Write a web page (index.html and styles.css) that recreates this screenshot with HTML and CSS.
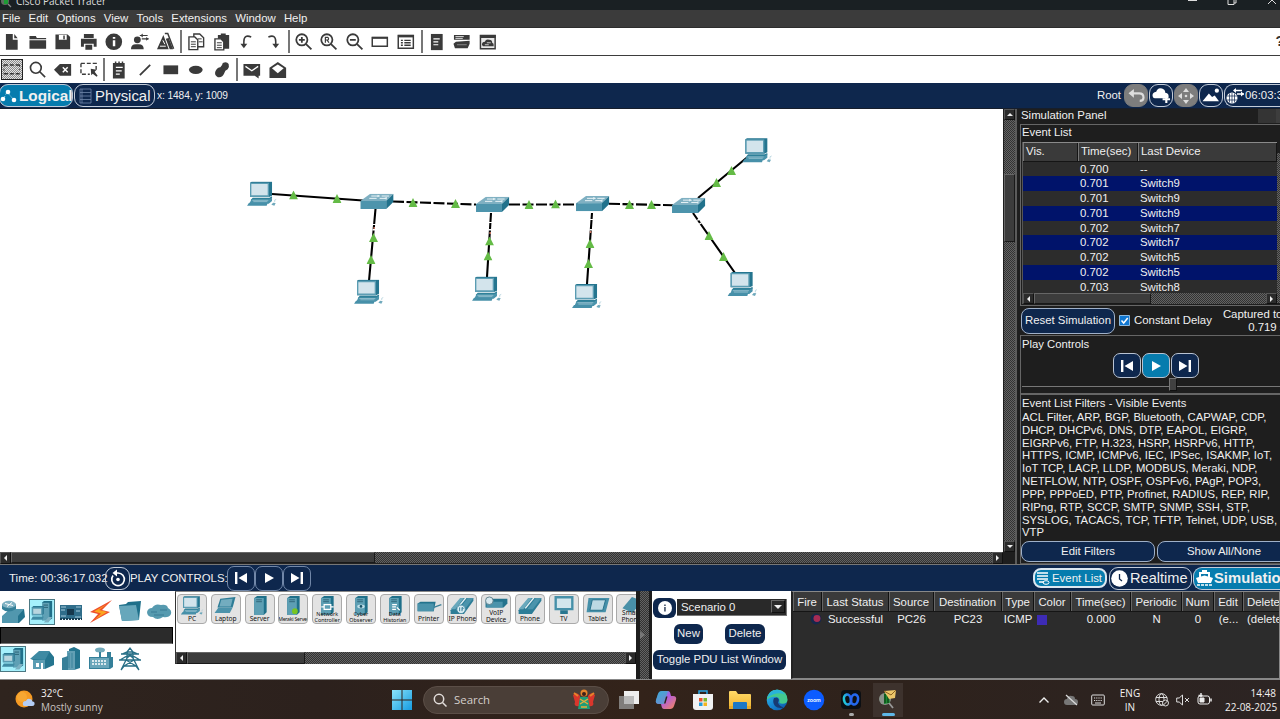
FILE: index.html
```html
<!DOCTYPE html>
<html lang="en">
<head>
<meta charset="utf-8">
<title>Cisco Packet Tracer</title>
<link rel="stylesheet" href="styles.css">
</head>
<body>
<svg class="defs" width="0" height="0">
  <defs>
    <symbol id="pc" viewBox="0 0 90 75">
      <path d="M10 4l5-3h61v42l-9 4H10z" fill="#25758f"/>
      <path d="M10 4h57v43H10z" fill="#5c9db3"/>
      <path d="M14 8h49v34H14z" fill="#d3e4ec"/>
      <path d="M18 49h50l8-4v6l-8 5H12z" fill="#2f8099"/>
      <path d="M14 54h54l8-5v10l-10 8H8z" fill="#4a93ab"/>
      <path d="M17 57h48M20 61h42" stroke="#cfe3ea" stroke-width="1.5"/>
      <path d="M7 64h56l-3 9H1z" fill="#4790a9"/>
      <path d="M74 70l5-6 8 1-4 8z" fill="#6fa9bc"/>
      <path d="M84 62q-2-8 5-8" stroke="#a5c8d5" stroke-width="2" fill="none"/>
    </symbol>
    <symbol id="switch" viewBox="0 0 100 46">
      <path d="M0 22L30 0h70L78 23z" fill="#7fb0c2"/>
      <path d="M0 22h78v24H0z" fill="#4d94ac"/>
      <path d="M78 22l22-22v24L78 46z" fill="#22728c"/>
      <path d="M33 7h22M64 7h22M27 14h22M58 14h20" stroke="#eaf4f7" stroke-width="3"/>
      <path d="M52 3l9 4-10 4zM80 10l-10 4 9 4z" fill="#e3f0f4"/>
    </symbol>
    <symbol id="tri" viewBox="0 0 9 9"><path d="M4.5 0L9 9H0z" fill="#64bb46"/></symbol>
    <symbol id="tower" viewBox="0 0 26 26">
      <path d="M13 3l2-2h9v19l-3 2h-8z" fill="#1f6f89"/><path d="M13 3h8v19h-8z" fill="#5fa0b5"/>
      <path d="M14.500 5.500h5M14.500 8h5" stroke="#285f73"/>
      <path d="M2 8l1.500-1.500H15V15l-1.500 1.500H2z" fill="#2b7892"/><path d="M2 8h11.500v8.500H2z" fill="#5a9cb2"/><path d="M3.500 9.500h8.500v5.500H3.500z" fill="#b9d6df"/>
      <path d="M3 18h12l-1.500 3.500H1z" fill="#3f8ba4"/><path d="M15 24.500l5-6h4l-4 6z" fill="#7db1c2"/>
    </symbol>
    <symbol id="prev" viewBox="0 0 14 14"><path d="M1 1h2.4v12H1zM13 2v10L4.5 7z" fill="#fff"/></symbol>
    <symbol id="play" viewBox="0 0 14 14"><path d="M3 2l9 5-9 5z" fill="#fff"/></symbol>
    <symbol id="next" viewBox="0 0 14 14"><path d="M10.600 1H13v12h-2.400zM1 2l8.500 5L1 12z" fill="#fff"/></symbol>
    <symbol id="phone" viewBox="0 0 26 20">
      <path d="M1 15L12 2h13v3L15 19H1z" fill="#2d7d97"/><path d="M1 14L11 2h4L6 14z" fill="#69a8bc"/>
      <path d="M10 14L19 2h6l-9 12z" fill="#4b94ac"/><path d="M8 13L17 2" stroke="#e7f2f5" stroke-width="1.500"/>
    </symbol>
    <symbol id="srv" viewBox="0 0 26 20"><path d="M7 2l3-2h10v17l-3 3H7z" fill="#1f708a"/><path d="M7 2h10v18H7z" fill="#5d9fb4"/><path d="M9 4h6M9 6h6" stroke="#2f6478"/></symbol>
    <linearGradient id="gw" x2="1" y2="1"><stop stop-color="#8be4fb"/><stop offset="1" stop-color="#159be0"/></linearGradient>
    <linearGradient id="ge" x2="1" y2="1"><stop stop-color="#35c1e8"/><stop offset=".5" stop-color="#1787d4"/><stop offset="1" stop-color="#0b4fa3"/></linearGradient>
    <linearGradient id="gc" x2="1" y2="1"><stop stop-color="#3aa5f5"/><stop offset=".45" stop-color="#b15be0"/><stop offset="1" stop-color="#f98a55"/></linearGradient>
    <linearGradient id="gf" x2="0" y2="1"><stop stop-color="#ffd968"/><stop offset="1" stop-color="#f2b632"/></linearGradient>
    <linearGradient id="gx" x2="1"><stop stop-color="#20c9d8"/><stop offset="1" stop-color="#2b62f0"/></linearGradient>
  </defs>
</svg>

<header class="titlebar">
  <svg width="13" height="10" viewBox="0 0 13 10"><circle cx="5" cy="1" r="4" fill="#5f6b60"/><path d="M4 0h4v4H4z" fill="#1e9a35"/><path d="M8 4l3 3" stroke="#888" stroke-width="1.300"/></svg>
  <span class="title">Cisco Packet Tracer</span>
  <svg class="winbtns" width="95" height="10" viewBox="0 0 95 10" fill="none" stroke="#ddd"><path d="M3 .5h9"/><path d="M43 0v4.500h6V0M49 3h2V0"/><path d="M83 4l4-4M87 0l4 4"/></svg>
</header>
<nav class="menubar"><span>File</span><span>Edit</span><span>Options</span><span>View</span><span>Tools</span><span>Extensions</span><span>Window</span><span>Help</span></nav>

<div class="toolbar">
  <svg viewBox="0 0 20 20"><path d="M4 2h7v6h5v10H4zM12.500 2L16 6.500h-3.500z"/></svg>
  <svg viewBox="0 0 20 20"><path d="M1.500 4H8l1 2h9.500v1.500h-17zM1.500 8.500h17V17h-17z"/></svg>
  <svg viewBox="0 0 20 20"><path fill-rule="evenodd" d="M2.500 2.500h12.500L17.500 5v12.500h-15zM6 3v5h8V3zM10.500 3.500H12v4h-1.500z"/></svg>
  <svg viewBox="0 0 20 20"><path d="M5 2h10v4H5zM2 7h16v8h-3v-3H5v3H2zM6.500 13h7v5h-7z"/></svg>
  <svg viewBox="0 0 20 20"><circle cx="10" cy="10" r="8.500"/><path d="M9 8.500h2.500v6H9zM9 5h2.500v2H9z" fill="#fff"/></svg>
  <svg viewBox="0 0 20 20"><circle cx="7.500" cy="8" r="3.500"/><path d="M1 17.500q0-5 5-5l3 0q5 0 5 5zM10 3h8v1.200h-8zM12 6.500h7v1.200h-7z"/><path d="M13 1.500v4L10.500 3.600zM16.500 5v4L19 7z"/></svg>
  <svg viewBox="0 0 20 20"><path d="M1 17.500L7.500 3l5.500 14.500zM13 6l4.500 11.500H14L10 7z"/><path d="M9 1.500h3L18 17" fill="none" stroke="#3a3a3a" stroke-width="1.500"/><path d="M4 14.500h6M7 8.500l2 4" stroke="#fff"/></svg>
  <i class="sep"></i>
  <svg viewBox="0 0 20 20"><g fill="#fff" stroke="#3a3a3a" stroke-width="1.400"><path d="M8 2h6l4 4v9H8z"/><path d="M3 5h6l3 3v10H3z"/></g><path d="M5 10h5M5 12.500h5M5 15h5M12 7h4M13 10h4" stroke="#3a3a3a"/></svg>
  <svg viewBox="0 0 20 20"><path d="M6 3h3V1.500h5V3h3.500v14H6z"/><path d="M3 7h6l3 3v8.300H3z" fill="#fff" stroke="#3a3a3a" stroke-width="1.400"/><path d="M5 11h5M5 13.500h5M5 16h5" stroke="#3a3a3a"/></svg>
  <svg viewBox="0 0 20 20"><path d="M14.500 5Q7 2 7 10v3" fill="none" stroke="#3a3a3a" stroke-width="1.600"/><path d="M3.500 12h7L7 16.500z"/></svg>
  <svg viewBox="0 0 20 20"><path d="M5.500 5Q13 2 13 10v3" fill="none" stroke="#3a3a3a" stroke-width="1.600"/><path d="M9.500 12h7L13 16.500z"/></svg>
  <i class="sep"></i>
  <svg viewBox="0 0 20 20"><g fill="none" stroke="#3a3a3a" stroke-width="1.800"><circle cx="8" cy="8" r="5.700"/><path d="M12.300 12.300l5.500 5.500M5 8h6M8 5v6"/></g></svg>
  <svg viewBox="0 0 20 20"><g fill="none" stroke="#3a3a3a" stroke-width="1.800"><circle cx="8" cy="8" r="5.700"/><path d="M12.300 12.300l5.500 5.500"/><path d="M6.500 11V5.500h2.500q1.500 1.300 0 2.700H7M8.500 8.500l1.700 2.500" stroke-width="1.200"/></g></svg>
  <svg viewBox="0 0 20 20"><g fill="none" stroke="#3a3a3a" stroke-width="1.800"><circle cx="8" cy="8" r="5.700"/><path d="M12.300 12.300l5.500 5.500M5 8h6"/></g></svg>
  <svg viewBox="0 0 20 20"><path d="M2.300 5.500h15.400v9H2.300z" fill="#fff" stroke="#3a3a3a" stroke-width="1.500"/><path d="M2 5h16v2H2z"/></svg>
  <svg viewBox="0 0 20 20"><path d="M2.300 3.500h15.400v13H2.300z" fill="#fff" stroke="#3a3a3a" stroke-width="1.500"/><path d="M2 3h16v2.500H2z"/><path d="M5 8.500h2M5 11h2M5 13.500h2M8.500 8.500H15M8.500 11H15M8.500 13.500H15" stroke="#3a3a3a" stroke-width="1.400"/></svg>
  <i class="sep"></i>
  <svg viewBox="0 0 20 20"><path d="M4 2h12v16.500H4z"/><path d="M6.500 7H13M6.500 10h5M6.500 13h5" stroke="#fff" stroke-width="1.200"/></svg>
  <svg viewBox="0 0 20 20"><path d="M2 3h16v5H2zM4 10l14-1v3l-2 4.500H3L1.500 12z"/><path d="M3.500 4.700H12M3.500 6.500H11" stroke="#ddd"/><path d="M5 13h10" stroke="#888"/></svg>
  <svg viewBox="0 0 20 20"><path d="M2.500 3.500h15v13.500h-15z" fill="#e8e8e8" stroke="#3a3a3a" stroke-width="1.500"/><path d="M2 3h16v3H2zM4 13q0-3 3-3 1-3 4.500-2 3 0 3 3 2 .5 1.500 3.500H5z"/><path d="M9 11h4M7 13h4" stroke="#ccc"/></svg>
  <b class="help">?</b>
</div>
<div class="toolbar second">
  <span class="picked"><svg viewBox="0 0 20 20"><path d="M2 5h16M2 14h16" fill="none" stroke="#333" stroke-width="1.500" stroke-dasharray="4 2"/><path d="M2 5v9M18 5v5" stroke="#333" stroke-dasharray="2 2"/></svg></span>
  <svg viewBox="0 0 20 20"><g fill="none" stroke="#3a3a3a" stroke-width="1.700"><circle cx="8" cy="8" r="5.500"/><path d="M12 12l5.500 5.500"/></g></svg>
  <svg viewBox="0 0 20 20"><path d="M7 4h11.500v12H7L1 10z"/><path d="M10 7.500l5 5M15 7.500l-5 5" stroke="#fff" stroke-width="1.500"/></svg>
  <svg viewBox="0 0 20 20"><path d="M2 3.500h15.500v8M2 3.500v11h9" fill="none" stroke="#3a3a3a" stroke-width="1.400" stroke-dasharray="4 2"/><path d="M12 9l6 1-2 2 3 4-1 1-4-3-1.500 1.500z"/></svg>
  <i class="sep"></i>
  <svg viewBox="0 0 20 20"><path d="M4 3h2V1.500h1.500V3h2V1.500H11V3h2V1.500h1.500V3H16v16H4z"/><path d="M7 7.500h7M7 11h6M7 14.500h4" stroke="#fff" stroke-width="1.300"/></svg>
  <svg viewBox="0 0 20 20"><path d="M5 15.500L15.500 5" stroke="#3a3a3a" stroke-width="1.800"/></svg>
  <svg viewBox="0 0 20 20"><path d="M2.500 5.500h15v9h-15z"/></svg>
  <svg viewBox="0 0 20 20"><ellipse cx="10" cy="10" rx="7" ry="4.200"/></svg>
  <svg viewBox="0 0 20 20"><path d="M11 3q4-2 6 1 1 3-1 5.500-3 1-3.500 4-2 5-6.500 4-4-2-2.500-6 2-4 5-4 2-2 2.500-4.500z"/></svg>
  <i class="sep"></i>
  <svg viewBox="0 0 20 20"><path d="M1.500 4h17v12H17v3l-4-3H1.500z"/><path d="M3.500 6.500l6.500 4.500 6.500-4.500" fill="none" stroke="#fff" stroke-width="1.300"/></svg>
  <svg viewBox="0 0 20 20"><path d="M1.500 8L10 2l8.500 6v10.500h-17z"/><path d="M4 8.500l6-4 6 4-6 5z" fill="#fff"/></svg>
</div>

<div class="bluebar top">
  <div class="tab on logical"><svg width="17" height="16" viewBox="0 0 17 16"><path d="M3 12L7 4l7 8" fill="none" stroke="#9fd2e6" stroke-dasharray="1.500 1.500"/><circle cx="3" cy="11" r="2.300" fill="#fff"/><circle cx="8" cy="4" r="2.300" fill="#fff"/><circle cx="14" cy="12" r="2.300" fill="#fff"/></svg><b>Logical</b></div>
  <div class="tab physical"><svg width="13" height="16" viewBox="0 0 13 16" fill="none" stroke="#7087aa" stroke-width=".8"><path d="M1 1h11v14H1zM1 4.500h11M1 8h11M1 11.500h11M3 1v14"/></svg><span>Physical</span></div>
  <span class="coords">x: 1484, y: 1009</span>
  <span class="root">Root</span>
  <span class="round grey"><svg width="18" height="15" viewBox="0 0 16 14"><path d="M3 5h8q4 0 4 4 0 3-3.500 3" fill="none" stroke="#ddd" stroke-width="2"/><path d="M6 1v8L1 5z" fill="#ddd"/></svg></span>
  <span class="round"><svg width="20" height="17" viewBox="0 0 18 16"><path d="M1 8q0-3 3.500-3.500Q6 0 10 1.500q3 1 3 4 4 .5 3 5H3Q1 10.500 1 8z" fill="#fff"/><path d="M14 8v7M10.500 11.500h7" stroke="#fff" stroke-width="2"/></svg></span>
  <span class="round grey"><svg width="18" height="18" viewBox="0 0 18 18"><path d="M9 1l3 4H6zM9 17l3-4H6zM1 9l4-3v6zM17 9l-4-3v6z" fill="#ddd"/><circle cx="9" cy="9" r="1.300" fill="#ddd"/></svg></span>
  <span class="round"><svg width="20" height="17" viewBox="0 0 18 16"><path d="M1 13.500L7 6l3 3.500L12.500 8l4 5.500z" fill="#fff"/><circle cx="14.500" cy="3.500" r="2" fill="#fff"/></svg></span>
  <span class="round clock"><svg width="20" height="18" viewBox="0 0 20 18"><circle cx="7" cy="11" r="5.500" fill="#fff"/><path d="M2 9h10M2 13h10M7 6v10M4.500 6.500v9M9.500 6.500v9" stroke="#0e274d" stroke-width=".7"/><path d="M9 3.500h8M12 7h7" stroke="#fff" stroke-width="1.400"/><path d="M11 1v5L8 3.500zM16 4.500v5l3-2.500z" fill="#fff"/></svg><span>06:03:30</span></span>
</div>

<main class="work">
  <section class="stage">
    <div class="stagerow">
      <svg class="canvas" width="1003" height="443" viewBox="0 109 1003 443">
        <g stroke="#000" stroke-width="2.100">
          <path d="M272 194L363 200.500M375.500 209L369 281M491 213L487 277M592 213L587 284M698 198L747 157.500M693 213L735 273"/>
          <path d="M393 201.500L476 204.500M509 204.500H578M609 203.800L673 205.200" stroke-dasharray="11 2.500"/>
        </g>
        <path d="M374.500 224v1M374 229v1.500M490.500 222v1M490 229v1.500M591.500 219v1M591 229v1.500M698 219l1 1M700 223l.6 1" stroke="#fff" stroke-width="3"/>
        <path d="M374.200 227v2M490.200 232v2M590.600 231v2" stroke="#c87663" stroke-width="1.500"/>
        <g>
          <use href="#switch" x="360.300" y="193.700" width="33.300" height="15.300"/><use href="#switch" x="476" y="196.700" width="33.300" height="15.300"/><use href="#switch" x="576" y="196" width="33.300" height="15.300"/><use href="#switch" x="672" y="197.800" width="33.300" height="15.300"/>
          <use href="#pc" x="246.700" y="181.300" width="30" height="25"/><use href="#pc" x="353.700" y="279.500" width="30" height="25"/><use href="#pc" x="471.700" y="276.300" width="30" height="25"/><use href="#pc" x="571.700" y="283.700" width="30" height="25"/><use href="#pc" x="742" y="138" width="30" height="25"/><use href="#pc" x="727.300" y="271.700" width="30" height="25"/>
        </g>
        <g>
          <use href="#tri" x="289" y="190.500" width="9" height="9"/><use href="#tri" x="332.500" y="194" width="9" height="9"/><use href="#tri" x="408.500" y="198" width="9" height="9"/><use href="#tri" x="451" y="199" width="9" height="9"/>
          <use href="#tri" x="369" y="233" width="9" height="9"/><use href="#tri" x="366.500" y="255" width="9" height="9"/><use href="#tri" x="485" y="236.500" width="9" height="9"/><use href="#tri" x="483.500" y="251.500" width="9" height="9"/>
          <use href="#tri" x="524.500" y="200" width="9" height="9"/><use href="#tri" x="551" y="199.500" width="9" height="9"/><use href="#tri" x="625" y="200" width="9" height="9"/><use href="#tri" x="647" y="200" width="9" height="9"/>
          <use href="#tri" x="585.500" y="239" width="9" height="9"/><use href="#tri" x="584" y="259" width="9" height="9"/><use href="#tri" x="712" y="178" width="9" height="9"/><use href="#tri" x="727" y="166" width="9" height="9"/><use href="#tri" x="704.500" y="231" width="9" height="9"/><use href="#tri" x="719" y="252" width="9" height="9"/>
        </g>
      </svg>
      <div class="vscroll"><i class="arr up"></i><i class="track a"></i><i class="thumb"></i><i class="track b"></i><i class="arr down"></i></div>
    </div>
    <div class="hscroll main"><i class="arr left"></i><i class="thumb"></i><i class="track"></i><i class="arr right"></i></div>
  </section>

  <aside class="panel">
    <div class="phead"><span>Simulation Panel</span><i class="dock"></i></div>
    <section class="group events">
      <h3>Event List</h3>
      <div class="ev">
        <div class="evmain">
          <div class="evrow evhead"><span>Vis.</span><span>Time(sec)</span><span>Last Device</span></div>
          <div class="evbody">
            <div class="evrow"><span></span><span>0.700</span><span>--</span></div>
            <div class="evrow sel"><span></span><span>0.701</span><span>Switch9</span></div>
            <div class="evrow"><span></span><span>0.701</span><span>Switch9</span></div>
            <div class="evrow sel"><span></span><span>0.701</span><span>Switch9</span></div>
            <div class="evrow"><span></span><span>0.702</span><span>Switch7</span></div>
            <div class="evrow sel"><span></span><span>0.702</span><span>Switch7</span></div>
            <div class="evrow"><span></span><span>0.702</span><span>Switch5</span></div>
            <div class="evrow sel"><span></span><span>0.702</span><span>Switch5</span></div>
            <div class="evrow"><span></span><span>0.703</span><span>Switch8</span></div>
          </div>
          <div class="hscroll evs"><i class="arr left"></i><i class="thumb"></i><i class="track"></i><i class="arr right"></i></div>
        </div>
        <div class="evside"></div>
      </div>
    </section>
    <section class="reset">
      <span class="btn big">Reset Simulation</span>
      <svg class="check" width="11" height="11" viewBox="0 0 11 11"><path d="M.5.5h10v10H.5z" fill="#1177d1" stroke="#8cb8de"/><path d="M2.500 5.500L4.700 8l4-5" fill="none" stroke="#fff" stroke-width="1.500"/></svg>
      <span>Constant Delay</span>
      <span class="captured">Captured to:<br>0.719 s</span>
    </section>
    <section class="group playbox">
      <h3>Play Controls</h3>
      <div class="plays"><span class="pbtn"><svg><use href="#prev"/></svg></span><span class="pbtn on"><svg><use href="#play"/></svg></span><span class="pbtn"><svg><use href="#next"/></svg></span></div>
      <div class="slider"><i></i></div>
    </section>
    <section class="group filters">
      <h3>Event List Filters - Visible Events</h3>
      <p>ACL Filter, ARP, BGP, Bluetooth, CAPWAP, CDP,<br>DHCP, DHCPv6, DNS, DTP, EAPOL, EIGRP,<br>EIGRPv6, FTP, H.323, HSRP, HSRPv6, HTTP,<br>HTTPS, ICMP, ICMPv6, IEC, IPSec, ISAKMP, IoT,<br>IoT TCP, LACP, LLDP, MODBUS, Meraki, NDP,<br>NETFLOW, NTP, OSPF, OSPFv6, PAgP, POP3,<br>PPP, PPPoED, PTP, Profinet, RADIUS, REP, RIP,<br>RIPng, RTP, SCCP, SMTP, SNMP, SSH, STP,<br>SYSLOG, TACACS, TCP, TFTP, Telnet, UDP, USB,<br>VTP</p>
      <div class="fbtns"><span class="btn">Edit Filters</span><span class="btn">Show All/None</span></div>
    </section>
  </aside>
</main>

<div class="bluebar bottom">
  <span class="time">Time: 00:36:17.032</span>
  <span class="round reload"><svg width="18" height="19" viewBox="0 0 18 19"><path d="M4 6.500a6.300 6.300 0 1 0 5-2.500H6" fill="none" stroke="#fff" stroke-width="1.700"/><path d="M8 .5v7L3.500 4z" fill="#fff"/><circle cx="9" cy="10.500" r="1.800" fill="#fff"/></svg></span>
  <span class="pc-label">PLAY CONTROLS:</span>
  <span class="pbtn line"><svg><use href="#prev"/></svg></span><span class="pbtn line"><svg><use href="#play"/></svg></span><span class="pbtn line"><svg><use href="#next"/></svg></span>
  <span class="tab on evtab"><svg width="14" height="14" viewBox="0 0 14 14"><path d="M1 2h11M1 5h11M1 8h11M3 11h5" stroke="#fff" stroke-width="1.400"/><ellipse cx="10" cy="11.500" rx="3" ry="1.800" fill="none" stroke="#fff"/></svg><span>Event List</span></span>
  <span class="tab rt"><svg width="17" height="17" viewBox="0 0 17 17"><circle cx="8.500" cy="8.500" r="8.300" fill="#fff"/><path d="M8.500 4v5l2.500 2" fill="none" stroke="#0e274d" stroke-width="1.300"/></svg><span>Realtime</span></span>
  <span class="tab on sim"><svg width="17" height="16" viewBox="0 0 17 16"><path d="M6 0h5v2h3v5l3 1-2 5H2L0 8l3-1V2h3z" fill="#fff"/><path d="M5 4h7v2.500L8.500 5.500 5 6.500z" fill="#0c79ab"/><path d="M1 15h15" stroke="#fff" stroke-width="1.500" stroke-dasharray="3 1"/></svg><b>Simulation</b></span>
</div>

<section class="lower">
  <div class="cats">
    <div class="catrow">
      <svg viewBox="0 0 26 26"><path d="M2 19l8-9h14l1 8-6 6H2z" fill="#23728c"/><path d="M2 17l8-7h14l-6 7zM2 17h16v7H2z" fill="#5197ae"/><path d="M2 5v5q6 5 14 0V5z" fill="#347f98"/><ellipse cx="9" cy="5.500" rx="7" ry="3.700" fill="#80b2c3"/><path d="M5 4.500l8 2M12 3.500l-5 4" stroke="#fff"/></svg>
      <span class="cat on"><svg viewBox="0 0 26 26"><use href="#tower"/></svg></span>
      <svg viewBox="0 0 26 26"><path d="M2 6h22v14H2z" fill="#2f6d8a"/><path d="M9 10h7v6H9z" fill="#16384d"/><path d="M3 8h5M18 8h5M3 11h4M18 12h4M3 17h5M17 18h6" stroke="#a5cbdc"/><path d="M2 20h22" stroke="#143b50" stroke-width="2" stroke-dasharray="2 1"/></svg>
      <svg viewBox="0 0 26 26"><path d="M24 1L2 13l8 2-8 9 20-11-8-2z" fill="#ee4f2b"/><path d="M19 5L6 12.500l7 2-6 6L19 13l-8-2z" fill="#fba51f"/></svg>
      <svg viewBox="0 0 26 26"><path d="M2 6l7-1 2-2 13-1-2 19-17 1z" fill="#1f708a"/><path d="M2 7l17-1 3 15-17 1z" fill="#67a7bb"/></svg>
      <svg viewBox="0 0 26 26"><path d="M1 13q1-4 5-4 3-5 9-3 6-1 7 3 4 2 3 6-2 4-8 3-6 4-10 0-6 0-6-5z" fill="#569aaf"/><path d="M5 13h6M14 11h7M8 16h10" stroke="#387b94"/></svg>
    </div>
    <div class="blackbox"></div>
    <div class="catrow">
      <span class="cat on"><svg viewBox="0 0 26 26"><use href="#tower"/></svg></span>
      <svg viewBox="0 0 26 26"><path d="M2 13l8-7h11l4 5v8l-9 4H4v-9z" fill="#25758f"/><path d="M4 14h12v9H4z" fill="#5b9db3"/><path d="M1 13l9-8h11l-5 9z" fill="#3e8aa3"/><path d="M7 17h3v4H7zM12 17h2v6h-2z" fill="#fff"/></svg>
      <svg viewBox="0 0 26 26"><path d="M11 3l5-2 6 3v18l-6 2h-5z" fill="#25758f"/><path d="M9 5h8v19H9z" fill="#629fb4"/><path d="M4 12l6-2v14H4z" fill="#377f98"/><path d="M11 7v15M14 7v15" stroke="#3b839c"/></svg>
      <svg viewBox="0 0 26 26"><path d="M1 11h18V6h4v5h2v10l-3 2H1z" fill="#347f99"/><path d="M2 12h19v10H2z" fill="#6aa6ba"/><path d="M4 15h15M4 18h15" stroke="#fff" stroke-width="1.500" stroke-dasharray="2 1"/><ellipse cx="12" cy="4" rx="5" ry="2.500" fill="#73aabb"/><path d="M12 6v5" stroke="#347f99" stroke-width="2"/></svg>
      <svg viewBox="0 0 26 26"><path d="M10 6l3-4 3 4v6l6 12M10 6v6L4 24M4 8h18M2 14h22M5 8l5-2h6l5 2M3 14l7-4h6l7 4M10 7l6 5M16 7l-6 5M9 14l10 6M17 14L7 20M7 20h12M7 20l-3 4M19 20l3 4" fill="none" stroke="#286f86" stroke-width="1.300"/></svg>
    </div>
  </div>
  <div class="devices">
    <div class="devlist">
      <div class="dev"><svg viewBox="0 0 90 75"><use href="#pc"/></svg><em>PC</em></div>
      <div class="dev"><svg viewBox="0 0 26 20"><path d="M7 3l16-2-3 11H4z" fill="#2d7c96"/><path d="M8 4l12-1-2 8H6z" fill="#73acbf"/><path d="M1 18l4-6h15l-3 6z" fill="#4c93ab"/></svg><em>Laptop</em></div>
      <div class="dev"><svg viewBox="0 0 26 20"><use href="#srv"/></svg><em>Server</em></div>
      <div class="dev"><svg viewBox="0 0 26 20"><use href="#srv"/><circle cx="15" cy="16" r="3" fill="#77c522"/></svg><em class="tight">Meraki Server</em></div>
      <div class="dev two"><svg viewBox="0 0 26 20"><use href="#srv"/><path d="M10 9h7v5h-7zM7 11.500h3M17 11.500h3" fill="none" stroke="#fff" stroke-width="1.300"/></svg><em>Network<br>Controller</em></div>
      <div class="dev two"><svg viewBox="0 0 26 20"><use href="#srv"/><ellipse cx="13" cy="11" rx="4" ry="2" fill="#bcdde7"/><circle cx="13" cy="11" r="1.400" fill="#134f65"/></svg><em>Cyber<br>Observer</em></div>
      <div class="dev two"><svg viewBox="0 0 26 20"><use href="#srv"/><path d="M10 9h5M10 11.500h4M10 14h4M15 12l3 3" stroke="#fff" stroke-width="1.300"/></svg><em>Data<br>Historian</em></div>
      <div class="dev"><svg viewBox="0 0 26 20"><path d="M1 8l3-2h16l-2 10H1z" fill="#24738d"/><path d="M1 8h17v8H1z" fill="#4b93ab"/><path d="M18 12l8-3" stroke="#3c8098" stroke-width="1.500"/></svg><em>Printer</em></div>
      <div class="dev"><svg viewBox="0 0 26 20"><use href="#phone"/><circle cx="12" cy="14" r="4.500" fill="#d9edf4" stroke="#448aa3"/><path d="M10.500 12v4M13 16v-4q3 1 0 2" stroke="#357c96" fill="none"/></svg><em>IP Phone</em></div>
      <div class="dev two"><svg viewBox="0 0 26 20"><path d="M2 6l4-3h19v5l-4 4H2z" fill="#24738d"/><path d="M3 6h17v6H3z" fill="#4b93ab"/><circle cx="6" cy="5" r="4" fill="#d8e9ef" stroke="#607f8b"/></svg><em class="wide">VoIP<br>Device</em></div>
      <div class="dev"><svg viewBox="0 0 26 20"><use href="#phone"/></svg><em>Phone</em></div>
      <div class="dev"><svg viewBox="0 0 26 20"><path d="M3 0h20v15H3z" fill="#4690a9"/><path d="M5.500 2.500h15v10h-15z" fill="#d3e6ed"/><path d="M9 15h8v4H9z" fill="#28768f"/></svg><em>TV</em></div>
      <div class="dev"><svg viewBox="0 0 26 20"><path d="M3 2h22l-4 15H1z" fill="#4690a9"/><path d="M7 4h14l-3 11H4.500z" fill="#bcd9e3" stroke="#24708a"/></svg><em>Tablet</em></div>
      <div class="dev two"><svg viewBox="0 0 26 20"><path d="M4 13L14 1l10 4-9 13z" fill="#4990a8"/></svg><em class="wide">Smart<br>Phone</em></div>
    </div>
    <div class="hscroll dv"><i class="arr left"></i><i class="thumb"></i><i class="track"></i><i class="arr right"></i></div>
  </div>
  <div class="splitter"><i></i></div>
  <div class="scenario">
    <div class="scrow"><span class="info"><svg width="14" height="14" viewBox="0 0 14 14"><circle cx="7" cy="7" r="7" fill="#fff"/><path d="M6.200 6h1.500v4.500H6.200zM6.200 3.500h1.500V5H6.200z" fill="#34435c"/></svg></span><span class="select">Scenario 0<i></i></span></div>
    <div class="scbtns"><span>New</span><span>Delete</span></div>
    <span class="toggle">Toggle PDU List Window</span>
  </div>
  <div class="pdu">
    <div class="prow phdr"><span>Fire</span><span>Last Status</span><span>Source</span><span>Destination</span><span>Type</span><span>Color</span><span>Time(sec)</span><span>Periodic</span><span>Num</span><span>Edit</span><span>Delete</span></div>
    <div class="prow"><span><svg width="12" height="12" viewBox="0 0 10 10"><circle cx="5" cy="5" r="4.500" fill="#15274b"/><circle cx="5.800" cy="4.600" r="2.900" fill="#a62c54"/></svg></span><span>Successful</span><span>PC26</span><span>PC23</span><span>ICMP</span><span><i class="swatch"></i></span><span>0.000</span><span>N</span><span>0</span><span>(e...</span><span>(delete)</span></div>
  </div>
</section>

<footer class="taskbar">
  <div class="weather">
    <svg width="20" height="20" viewBox="0 0 20 20"><circle cx="9" cy="9" r="8.500" fill="#f59a23"/><circle cx="7" cy="7" r="5" fill="#f9b13e" opacity=".6"/><path d="M8 15q-1-4 3-4 1-3 4-2 2 0 2.500 2.500 2.500 0 2 3Q19 16 17 16H10q-2 0-2-1z" fill="#b4cdf4"/></svg>
    <div><div>32°C</div><div class="dim">Mostly sunny</div></div>
  </div>
  <svg class="win" width="20" height="20" viewBox="0 0 20 20"><path d="M0 0h9.500v9.500H0zM10.500 0H20v9.500h-9.500zM0 10.500h9.500V20H0zM10.500 10.500H20V20h-9.500z" fill="url(#gw)"/></svg>
  <div class="search">
    <svg width="14" height="14" viewBox="0 0 14 14" fill="none" stroke="#e3dedb" stroke-width="1.500"><circle cx="6" cy="6" r="4.700"/><path d="M9.500 9.500l4 4"/></svg>
    <span>Search</span>
    <svg width="24" height="21" viewBox="0 0 24 21"><circle cx="12" cy="4" r="3.500" fill="#e6842b"/><path d="M1 6q4-4 7 1v10Q1 18 3 13zM23 6q-4-4-7 1v10q7 1 5-4z" fill="#d9362c"/><path d="M2 4l4 3M22 4l-4 3" stroke="#e6842b" stroke-width="2"/><path d="M8 8h8l2 12H6z" fill="#1e9d78"/><circle cx="12" cy="5" r="2" fill="#3f211a"/><path d="M8 10l8 5M16 10l-8 5M9 18h6" stroke="#e9aa3c" stroke-width="1.300"/></svg>
  </div>
  <div class="apps">
    <span><svg viewBox="0 0 22 22"><path d="M1 7h15v13H1z" fill="#807d7b"/><path d="M6 2h15v13H6z" fill="#eee"/><path d="M6 7h10v8H6z" fill="#bbb"/></svg></span>
    <span><svg viewBox="0 0 22 22"><path d="M7 2h6q2 0 2.500 3l.5 2h2q4 0 3 4l-2 6q-1 3-4 3H9q-2 0-2.500-3L6 15H4q-4 0-3-4l2-6q1-3 4-3z" fill="url(#gc)"/><path d="M7 2h6l-4 13H4q-4 0-3-4l2-6q1-3 4-3z" fill="#34b6c4" opacity=".6"/><path d="M12.500 7.500h-1.500L9 14.500h1.500z" fill="#2d221e"/></svg></span>
    <span><svg viewBox="0 0 22 22"><path d="M7 5V2h8v3" fill="none" stroke="#2aa5e2" stroke-width="1.500"/><path d="M1 5h20v13q0 3-3 3H4q-3 0-3-3z" fill="#f1f2f3"/><path d="M7 9h3.500v3.500H7z" fill="#e9512d"/><path d="M11.500 9H15v3.500h-3.500z" fill="#79b72c"/><path d="M7 13.500h3.500V17H7z" fill="#259cdc"/><path d="M11.500 13.500H15V17h-3.500z" fill="#f4b51e"/></svg></span>
    <span><svg viewBox="0 0 22 22"><path d="M0 3q0-1 1-1h6l2 3h12q1 0 1 1v13H0z" fill="url(#gf)"/><path d="M0 17h22v3H0z" fill="#e5a929"/><path d="M4 14q0-1 1-1h12q1 0 1 1v6H4z" fill="#1b78c6"/></svg></span>
    <span><svg viewBox="0 0 22 22"><circle cx="11" cy="11" r="10.300" fill="url(#ge)"/><path d="M1 9Q4 0 12 .800q9 1 9.500 10 0 4-5 4-4 0-3-3 0-4-5-4-5 0-7.500 3z" fill="#43c98f"/><path d="M1 9Q4 0 12 .800q5 1 7 5-7-4-18 3z" fill="#29b3d8"/><path d="M8 9q-2 4 1 8 3 3 9 1.500Q13 17 12 13.500 14 10 11 8.500z" fill="#163b74"/></svg></span>
    <span><svg viewBox="0 0 22 22"><circle cx="11" cy="11" r="10.300" fill="#0b5cff"/><text x="11" y="13" text-anchor="middle" class="zoomtxt">zoom</text></svg></span>
    <span class="dot"><svg viewBox="0 0 22 22"><rect x="1" y="2" width="20" height="19" rx="4" fill="#0c0f13"/><ellipse cx="14.500" cy="11.500" rx="3.500" ry="5" fill="none" stroke="#2468ee" stroke-width="2.600" transform="rotate(12 14.500 11.500)"/><ellipse cx="7.500" cy="11.500" rx="3.500" ry="5" fill="none" stroke="url(#gx)" stroke-width="2.600" transform="rotate(-12 7.500 11.500)"/></svg></span>
    <span class="active"><svg viewBox="0 0 22 22"><circle cx="8" cy="11" r="6" fill="#8b938b"/><path d="M7 5l5 3 1 7-6 1z" fill="#1b8c31"/><path d="M8 6v9M11 7v8" stroke="#0a2b10"/><path d="M12 15l4 5" stroke="#999" stroke-width="1.800"/><path d="M7 3l12-1-1 8-6 1z" fill="#edc669"/><path d="M7 3l7 4 5-5" fill="none" stroke="#8e6422"/></svg></span>
  </div>
  <div class="tray">
    <svg width="12" height="8" viewBox="0 0 12 8"><path d="M1.500 6.500L6 2l4.500 4.500" fill="none" stroke="#eee" stroke-width="1.400"/></svg>
    <svg width="16" height="12" viewBox="0 0 16 12"><path d="M1 8q0-3 3-3 1-4 5-3 3 0 3 3 3 0 3 3t-3 3H4q-3 0-3-3z" fill="#777"/><path d="M3 1l11 10" stroke="#ddd" stroke-width="1.200"/></svg>
    <svg width="14" height="12" viewBox="0 0 14 12" fill="none" stroke="#ddd"><rect x=".7" y="1" width="12.600" height="10" rx="1"/><path d="M3 4h8M3 6.500h8" stroke-dasharray="1.200 1"/><path d="M4 9h6"/></svg>
    <div class="lang">ENG<br>IN</div>
    <svg width="14" height="14" viewBox="0 0 14 14" fill="none" stroke="#ddd"><circle cx="6.500" cy="6.500" r="5.800"/><ellipse cx="6.500" cy="6.500" rx="2.500" ry="5.800"/><path d="M1 4.500h11M1 8.500h7"/><circle cx="10.500" cy="10" r="3" fill="#2d2421"/><path d="M8.500 12l4-4"/></svg>
    <svg width="14" height="12" viewBox="0 0 14 12" fill="none" stroke="#ddd"><path d="M.7 4h2.500L6.500 1v10L3.200 8H.7zM9 4l4 4M13 4L9 8"/></svg>
    <svg width="15" height="13" viewBox="0 0 15 13" fill="none" stroke="#eee"><rect x="1" y="3" width="11.500" height="8" rx="2"/><path d="M14 5.500v3" stroke-width="1.500"/><path d="M3 5h4v4H3z" fill="#eee"/><path d="M4 0v4M1.500 2.500h4" stroke-width="1.400"/></svg>
    <div class="date">14:48<br>22-08-2025</div>
  </div>
</footer>
</body>
</html>
```
FILE: styles.css
```css
* { box-sizing: border-box; }
html, body { margin: 0; padding: 0; }
body { width: 1280px; height: 719px; overflow: hidden; display: flex; flex-direction: column; background: #1e1e1e; color: #f0f0f0; font: 11.400px/13px "Liberation Sans", Arial, sans-serif; white-space: nowrap; }
.defs { position: absolute; }
i, em { font-style: normal; }
svg { flex: none; display: block; }
h3 { margin: 0; font-weight: 400; font-size: 11.300px; }

.titlebar { height: 10px; flex: none; display: flex; background: #1a2023; overflow: hidden; }
.title { margin-left: 3px; margin-top: -6px; font: 10px/14px "Open Sans", sans-serif; color: #ddd; }
.winbtns { margin-left: auto; margin-right: 0; }
.menubar { height: 18px; flex: none; display: flex; gap: 8.200px; padding: 2px 2px 0; background: #3b3b3b; border-bottom: 1px solid #2d2d2d; }

.toolbar { height: 28px; flex: none; display: flex; align-items: center; padding-left: 2px; background: #fff; border-bottom: 1px solid #3d3d3d; }
.toolbar > svg, .picked svg { width: 19.600px; height: 19.600px; fill: #3a3a3a; }
.toolbar > svg { margin-right: 6px; }
.sep { width: 2px; height: 23px; margin: 0 4px 0 -1px; background: #777; flex: none; }
.second { height: 27px; border: 0; padding-left: 1px; }
.picked { width: 22px; height: 21px; margin-right: 4.600px; flex: none; border: 1px solid #222; background: repeating-conic-gradient(#8c8c8c 0 25%, #e4e4e4 0 50%) 0 0/2px 2px; }
.help { margin-left: auto; font-size: 14px; color: #333; margin-right: -4px; }

.bluebar { flex: none; display: flex; align-items: center; background: #0e274d; }
.top { height: 26px; border-bottom: 1px solid #171e2b; }
.tab { display: flex; align-items: center; height: 23px; border: 1px solid #c3ccd9; border-radius: 9px; flex: none; overflow: hidden; }
.on { background: #067cae; }
.logical { width: 74px; margin-left: -1px; font-size: 15.300px; line-height: 18px; }
.logical b { margin-left: 2px; }
.physical { width: 81px; margin-left: 1px; padding-left: 4px; gap: 3px; font-size: 14.900px; line-height: 18px; }
.coords { margin-left: 2px; font-size: 10.200px; letter-spacing: -.1px; }
.root { margin-left: auto; margin-right: 3px; }
.round { width: 24px; height: 23px; margin-right: 1px; border: 1px solid #c3ccd9; border-radius: 9px; display: flex; align-items: center; justify-content: center; flex: none; }
.grey { background: #7d7d7d; border-color: #7d7d7d; }
.clock { width: 56px; margin-right: 0; border-right: 0; border-radius: 9px 0 0 9px; justify-content: flex-start; overflow: hidden; }

.work { height: 455px; flex: none; display: flex; }
.stage { width: 1015px; flex: none; background: #1e1e1e; }
.stagerow { height: 443px; display: flex; }
.canvas { background: #fff; }
.vscroll { width: 12px; display: flex; flex-direction: column; padding-left: 1px; background: #1e1e1e; }
.track { background: repeating-conic-gradient(#636363 0 25%, #333 0 50%) 0 0/2px 2px; flex: 1; }
.track.a { flex: 0 0 54px; }
.thumb { background: #3c3c3c; border: 1px solid; border-color: #666 #191919 #191919 #666; flex: none; }
.vscroll .thumb { height: 68px; }
.arr { width: 11px; height: 11px; flex: none; background: #2b2b2b; border: 1px solid; border-color: #555 #111 #111 #555; display: flex; align-items: center; justify-content: center; }
.arr::after { content: ""; border: 3px solid transparent; }
.up::after { border-top: 0; border-bottom: 3px solid #eee; }
.down::after { border-bottom: 0; border-top: 3px solid #eee; }
.left::after { border-left: 0; border-right: 3px solid #eee; }
.right::after { border-right: 0; border-left: 3px solid #eee; }
.hscroll { display: flex; height: 12px; }
.hscroll .arr { height: 12px; }
.main { width: 1003px; border-bottom: 1px solid #222; }
.main .thumb { width: 364px; }

.panel { width: 265px; height: 455px; flex: none; background: #1e1e1e; border-left: 2px solid #5b5b5b; padding-left: 3px; overflow: hidden; }
.phead { height: 15px; display: flex; justify-content: space-between; padding-left: 1px; line-height: 13px; }
.dock { width: 22px; height: 14px; background: #343434; border-right: 4px solid #3d3d3d; }
.group { border: 1px solid #666; border-right: 0; }
.events { height: 182px; padding-left: 1px; }
.events h3 { line-height: 15px; height: 17px; }
.ev { display: flex; border-left: 1px solid #555; width: 260px; }
.evmain { width: 254px; flex: none; }
.evside { width: 6px; margin-top: 11px; height: 150px; background: repeating-conic-gradient(#636363 0 25%, #333 0 50%) 0 0/2px 2px; }
.evrow { display: flex; height: 14.800px; line-height: 15px; background: #2c2c2c; }
.evrow span:nth-child(1) { width: 55px; padding-left: 3px; }
.evrow span:nth-child(2) { width: 60px; padding-left: 2px; }
.evrow span:nth-child(3) { width: 139px; padding-left: 2px; }
.evrow.evhead { height: 19.500px; line-height: 17px; border-top: 1px solid #8a8a8a; border-bottom: 1px solid #151515; background: #3a3a3a; }
.evhead span { border-right: 1px solid #151515; box-shadow: inset 1px 0 #777; }
.evrow.evhead span:nth-child(n+2) { padding-left: 3px; }
.sel { background: #00136a; }
.evbody { height: 131.500px; overflow: hidden; background: #2c2c2c; }
.evs { height: 11px; }
.evs .arr { height: 11px; }
.evs .thumb { width: 117px; }
.reset { height: 29px; display: flex; align-items: center; padding-left: 1px; }
.btn { display: flex; align-items: center; justify-content: center; height: 21px; border: 1px solid #9fb0c8; border-radius: 8px; background: #0e274d; }
.big { width: 94px; height: 26px; flex: none; }
.check { margin: 0 4px 0 4px; }
.captured { margin-left: 11px; text-align: right; width: 66px; line-height: 12.500px; }
.playbox { height: 59px; padding-left: 1px; }
.playbox h3 { height: 17px; line-height: 16px; }
.plays { display: flex; gap: 1px; margin-left: 91px; }
.pbtn { width: 28px; height: 25px; border: 1px solid #b9c3d2; border-radius: 7px; background: #0e274d; display: flex; align-items: center; justify-content: center; flex: none; }
.pbtn svg { width: 14px; height: 14px; }
.pbtn.on { background: #067cae; }
.slider { height: 14px; background: linear-gradient(#777, #777) 0 8px/100% 1px no-repeat; }
.slider i { display: block; margin-left: 147px; width: 8px; height: 13px; background: #414141; border: 1px solid; border-color: #777 #111 #111 #777; }
.filters { height: 170px; padding: 2px 0 0 1px; border-bottom-color: #555; }
.filters h3 { line-height: 13px; }
.filters p { margin: 1px 0 0; font-size: 11.300px; line-height: 12.820px; height: 130px; }
.fbtns { display: flex; gap: 2px; margin-left: -1px; }
.fbtns .btn { width: 134px; flex: none; }

.bottom { height: 27px; border-top: 1px solid #777; }
.time { margin-left: 9px; width: 96px; font-size: 11.500px; }
.reload { margin: 0; width: 25px; }
.pc-label { margin-left: 0; width: 97px; }
.line { width: 28px; margin-right: 0; border-color: #7187a8; }
.evtab { margin-left: auto; width: 74px; height: 20px; border: 2px solid #dce7f0; border-radius: 8px; padding-left: 1px; gap: 2px; font-size: 11.400px; }
.rt { width: 83px; margin-left: 2px; padding-left: 1px; gap: 2px; font-size: 14.600px; line-height: 18px; }
.sim { width: 87px; margin-left: 1px; padding-left: 2px; gap: 1px; font-size: 14.800px; line-height: 18px; border-right: 0; border-radius: 9px 0 0 9px; }

.lower { height: 89px; flex: none; display: flex; background: #fff; border-bottom: 1px solid #888; }
.cats { width: 175px; flex: none; }
.catrow { display: flex; gap: 3.200px; height: 36px; align-items: center; padding: 6px 0 0 0; }
.catrow > svg { width: 26px; height: 26px; }
.catrow:last-child { padding-top: 0; height: 29px; }
.cat { width: 26px; height: 26px; flex: none; background: #a5f0fc; border: 1px solid #4c7883; }
.cat svg { width: 24px; height: 24px; }
.blackbox { height: 17px; width: 173px; background: #2b2b2b; border: 1px solid #000; border-bottom-color: #777; }
.devices { width: 461px; flex: none; border-left: 1px solid #333; border-top: 1px solid #888; height: 73px; overflow: hidden; }
.devlist { display: flex; gap: 3.800px; padding: 2px 1px 0; height: 60px; overflow: hidden; }
.dev { width: 30px; height: 30px; flex: none; border: 1px solid #aaa; border-radius: 4px; background: #e3e3e3; display: flex; flex-direction: column; align-items: center; overflow: hidden; }
.dev svg { width: 26px; height: 19px; margin-top: 1px; }
.dev em { font: 6.600px/8px "Noto Sans", sans-serif; color: #111; text-align: center; }
.dev.two em { font-size: 5.400px; line-height: 5.500px; margin-top: -3px; }
.dev.two em.wide { font-size: 6.600px; line-height: 6.500px; margin-top: -5px; }
.dev em.tight { font-size: 5.200px; letter-spacing: -.25px; }
.dv .thumb { width: 118px; }
.splitter { width: 16px; flex: none; border: solid #1d1d1d; border-width: 0 3px 0 4px; background: repeating-conic-gradient(#636363 0 25%, #333 0 50%) 0 0/2px 2px; display: flex; align-items: center; }
.splitter i { border: 4px solid transparent; border-left: 5px solid #777; border-right: 0; }
.scenario { width: 139px; flex: none; padding: 7px 1px 0; }
.scrow { display: flex; gap: 1px; }
.info { width: 23px; height: 20px; border-radius: 6px; background: #0e274d; display: flex; align-items: center; justify-content: center; }
.select { width: 110px; height: 17px; margin-top: 1px; padding-left: 4px; line-height: 17px; display: flex; justify-content: space-between; background: #292929; border: 1px solid #777; border-width: 0 1px 1px 0; }
.select i { width: 14px; height: 13px; margin: 1px; border: 1px solid; border-color: #666 #111 #111 #666; display: flex; align-items: center; justify-content: center; }
.select i::after { content: ""; border: 4px solid transparent; border-top: 4px solid #eee; border-bottom: 0; }
.scbtns { display: flex; padding: 6px 0 0 21px; gap: 22px; }
.scbtns span, .toggle { height: 20px; border-radius: 6px; background: #0e274d; text-align: center; line-height: 19px; width: 40px; }
.scbtns span { width: 29px; }
.scbtns span + span { width: 40px; }
.toggle { display: block; width: 133px; margin-top: 6px; }
.pdu { flex: 1; overflow: hidden; background: #2c2c2c; border: 1px solid #888; border-color: #888 #888 #888 #222; border-left-width: 2px; }
.prow { display: flex; text-align: center; line-height: 14px; }
.prow span { flex: none; overflow: hidden; }
.phdr { height: 20px; line-height: 20px; background: #3a3a3a; border-bottom: 1px solid #151515; }
.phdr span { border-right: 1px solid #111; box-shadow: inset 1px 0 #666; }
.prow span:nth-child(1) { width: 29px; }
.prow span:nth-child(2) { width: 67px; }
.prow span:nth-child(3) { width: 45px; }
.prow span:nth-child(4) { width: 68px; }
.prow span:nth-child(5) { width: 32px; }
.prow span:nth-child(6) { width: 37px; }
.prow span:nth-child(7) { width: 60px; }
.prow span:nth-child(8) { width: 51px; }
.prow span:nth-child(9) { width: 32px; }
.prow span:nth-child(10) { width: 29px; }
.prow span:nth-child(11) { width: 40px; text-align: left; padding-left: 4px; }
.prow svg { margin: 1px 0 0 17px; }
.swatch { display: block; width: 10px; height: 10px; margin: 3px 0 0 3px; background: #3d2bb5; }

.taskbar { height: 39px; flex: none; display: flex; align-items: center; background: linear-gradient(90deg, #2f241e, #2c211d 25%, #33231a 50%, #2e221c 70%, #2c2423); font: 10px/14px "Open Sans", sans-serif; color: #f4f2f1; }
.weather { display: flex; align-items: center; gap: 6px; width: 376px; padding-left: 15px; flex: none; }
.dim { color: #c9c3c0; }
.win { margin: 0 11px 0 16px; }
.search { width: 186px; height: 28px; border-radius: 14px; background: #4a3e37; border: 1px solid #5b4e47; display: flex; align-items: center; padding: 0 12px 0 9px; font-size: 11.400px; flex: none; color: #d5cfcb; }
.search span { flex: 1; margin-left: 7px; }
.apps { display: flex; margin-left: 1.500px; }
.apps span { width: 37px; height: 36px; display: flex; flex-direction: column; align-items: center; justify-content: center; }
.apps svg { width: 22px; height: 22px; }
.apps .active, .apps .dot { padding-top: 5px; }
.active { background: linear-gradient(#3d322d, #3d322d) center/30px 34px no-repeat; }
.active::after { content: ""; width: 13px; height: 3px; margin-top: 3px; border-radius: 2px; background: #5fb8e8; }
.dot::after { content: ""; width: 5px; height: 3px; margin-top: 3px; border-radius: 2px; background: #aaa; }
.zoomtxt { font: 700 5.500px "Lato", sans-serif; fill: #fff; }
.tray { margin-left: auto; display: flex; align-items: center; padding-right: 4px; gap: 7px; }
.tray svg:nth-of-type(1) { margin-right: 6px; }
.tray svg:nth-of-type(2) { margin-right: 5px; }
.lang { text-align: center; width: 22px; margin: 0 7px 0 7px; }
.date { text-align: right; width: 51px; margin-left: 6px; }
```
